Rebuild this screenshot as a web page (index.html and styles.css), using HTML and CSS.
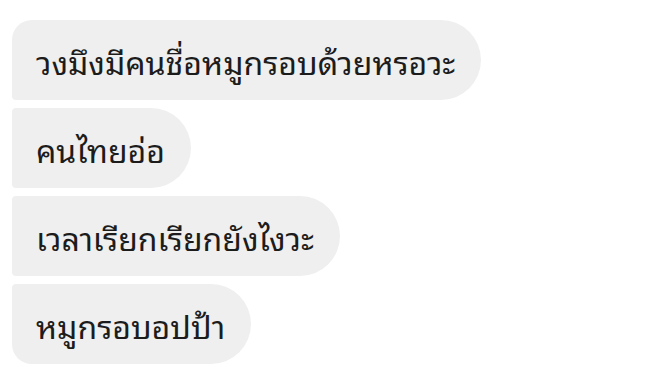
FILE: index.html
```html
<!DOCTYPE html>
<html lang="th">
<head>
    <meta charset="UTF-8">
    <meta name="viewport" content="width=device-width, initial-scale=1.0">
    <title>Chat</title>
    <link rel="stylesheet" href="styles.css">
</head>
<body>
    <div class="thread">
        <div class="bubble first">วงมึงมีคนชื่อหมูกรอบด้วยหรอวะ</div>
        <div class="bubble">คนไทยอ่อ</div>
        <div class="bubble">เวลาเรียกเรียกยังไงวะ</div>
        <div class="bubble last">หมูกรอบอปป้า</div>
    </div>
</body>
</html>
```

FILE: styles.css
```css
body {
    margin: 0;
    background-color: #ffffff;
    font-family: "Noto Sans Thai Looped", "Liberation Sans", sans-serif;
}

.thread {
    display: flex;
    flex-direction: column;
    align-items: flex-start;
    gap: 8px;
    padding: 20px 12px;
}

.bubble {
    height: 80px;
    box-sizing: border-box;
    display: flex;
    align-items: center;
    padding: 0 26px 0 24px;
    background-color: #efefef;
    color: #1c1c1c;
    font-size: 32px;
    border-radius: 4px 40px 40px 4px;
}

.bubble.first {
    border-top-left-radius: 20px;
}

.bubble.last {
    border-bottom-left-radius: 20px;
}
```
